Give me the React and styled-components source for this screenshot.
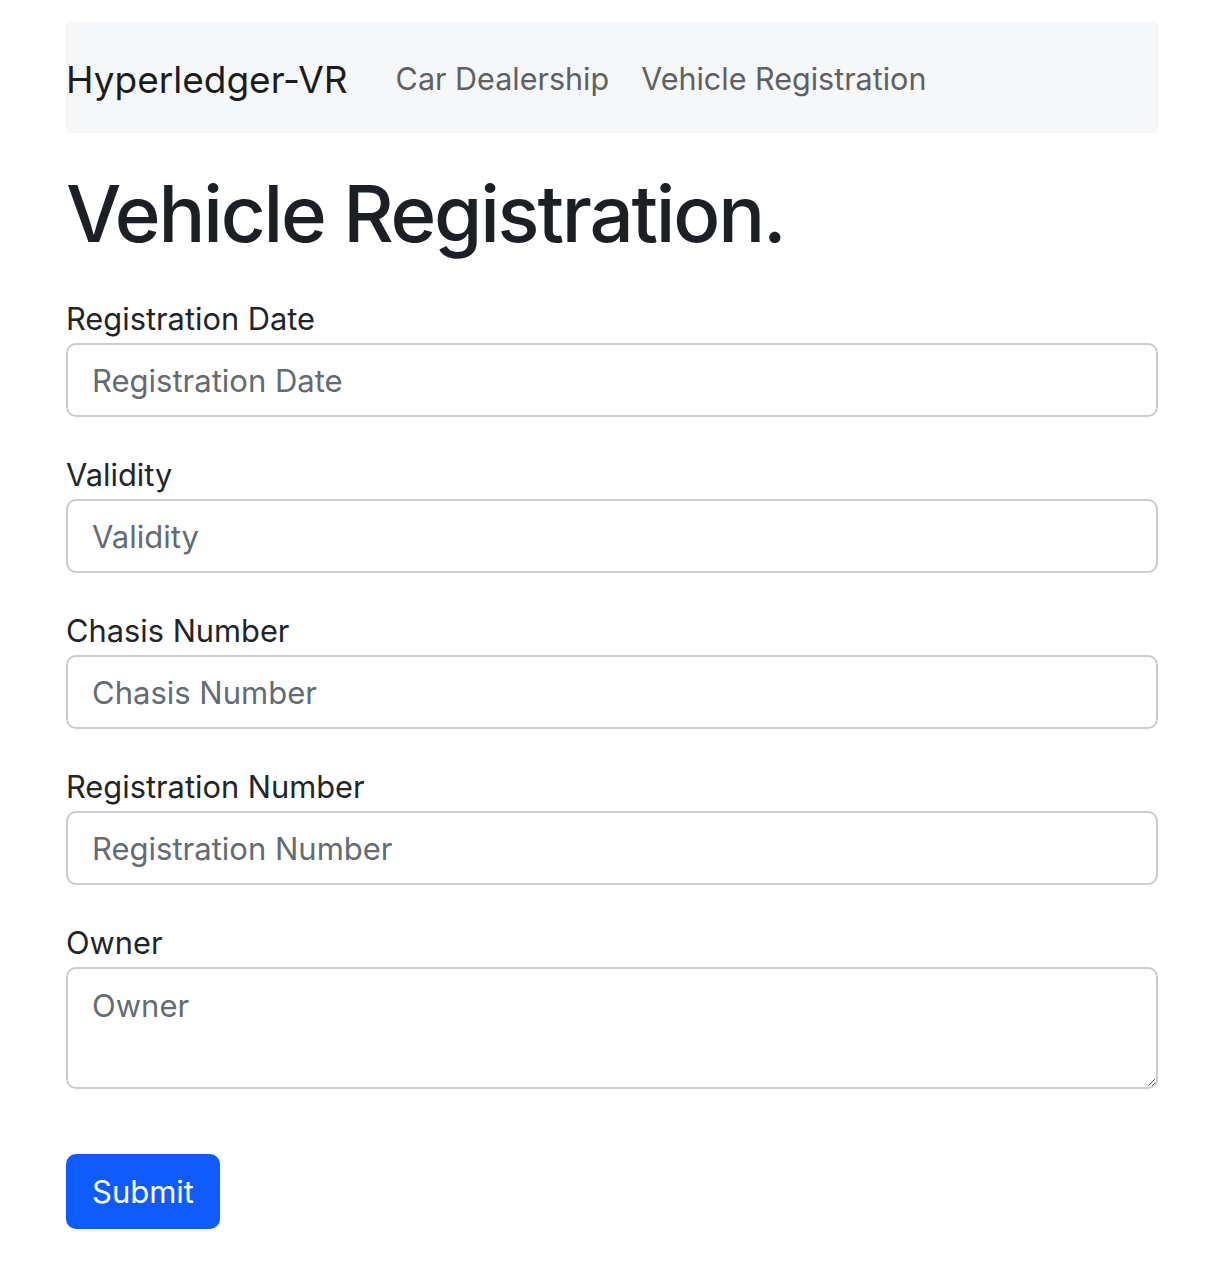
import React from 'react';
import styled, { createGlobalStyle } from 'styled-components';

const GlobalStyle = createGlobalStyle`
  body {
    margin: 0;
    background: #fff;
    font-family: Inter, "Noto Sans", "Liberation Sans", sans-serif;
    color: #212529;
  }
  * { box-sizing: border-box; }
`;

const Page = styled.div`
  width: 1092px;
  margin-left: 66px;
  padding-top: 22px;
  padding-bottom: 34px;
`;

const Navbar = styled.nav`
  height: 111px;
  padding-top: 4px;
  background: #f6f7f9;
  display: flex;
  align-items: center;
`;

const Brand = styled.a`
  font-size: 37px;
  color: #1a1d20;
  margin-right: 32px;
  text-decoration: none;
  line-height: 1;
`;

const NavLink = styled.a`
  font-size: 30.5px;
  color: #5e6062;
  padding: 0 16px;
  text-decoration: none;
  line-height: 1;
`;

const Title = styled.h1`
  font-size: 78px;
  font-weight: 500;
  line-height: 94px;
  margin: 34px 0 35px;
  color: #1c1f23;
  letter-spacing: -2.2px;
`;

const Group = styled.div`
  margin-bottom: ${p => p.$gap || 35}px;
`;

const Label = styled.label`
  display: block;
  font-size: 30.8px;
  line-height: 45px;
  margin-bottom: 2px;
  color: #212529;
`;

const Input = styled.input`
  display: block;
  width: 100%;
  height: 74px;
  padding: 12px 24px;
  font-family: inherit;
  font-size: 31px;
  line-height: 45px;
  color: #212529;
  border: 2px solid #c8cdd4;
  border-radius: 10px;
  outline: none;
  &::placeholder { color: #636b73; }
`;

const TextArea = styled.textarea`
  display: block;
  width: 100%;
  height: 122px;
  padding: 14px 24px;
  font-family: inherit;
  font-size: 31px;
  line-height: 45px;
  color: #212529;
  border: 2px solid #c8cdd4;
  border-radius: 10px;
  outline: none;
  &::placeholder { color: #636b73; }
`;

const Button = styled.button`
  height: 75px;
  padding: 0 26px;
  font-family: inherit;
  font-size: 31px;
  color: #fff;
  background: #0f5bfd;
  border: none;
  border-radius: 10px;
`;

const fields = ['Registration Date', 'Validity', 'Chasis Number', 'Registration Number'];

export default function App() {
  return (
    <>
      <GlobalStyle />
      <Page>
        <Navbar>
          <Brand href="#">Hyperledger-VR</Brand>
          <NavLink href="#">Car Dealership</NavLink>
          <NavLink href="#">Vehicle Registration</NavLink>
        </Navbar>
        <Title>Vehicle Registration.</Title>
        <form>
          {fields.map(f => (
            <Group key={f}>
              <Label>{f}</Label>
              <Input placeholder={f} />
            </Group>
          ))}
          <Group $gap={65}>
            <Label>Owner</Label>
            <TextArea placeholder="Owner" />
          </Group>
          <Button type="button">Submit</Button>
        </form>
      </Page>
    </>
  );
}
